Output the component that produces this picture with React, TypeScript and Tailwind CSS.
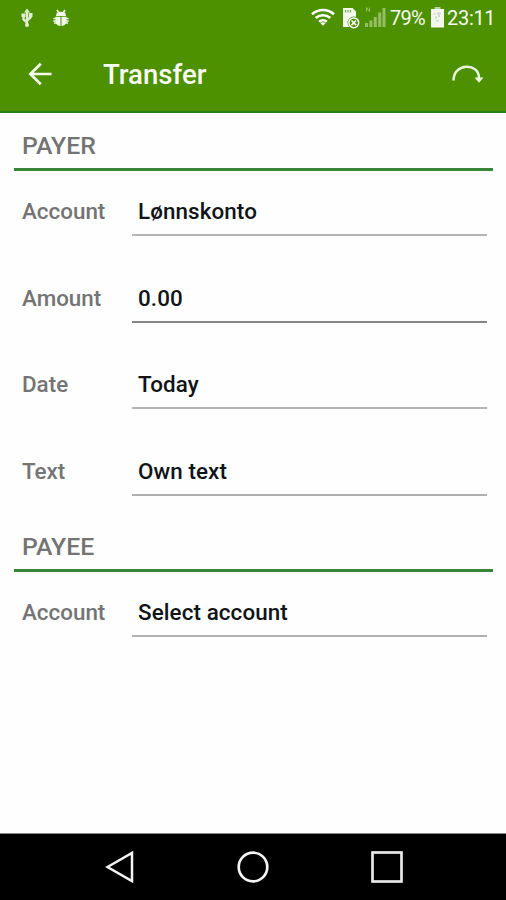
type Field = { label: string; value: string; line: string };

const payerFields: Field[] = [
  { label: 'Account', value: 'Lønnskonto', line: 'border-[#b4b4b4]' },
  { label: 'Amount', value: '0.00', line: 'border-[#858585]' },
  { label: 'Date', value: 'Today', line: 'border-[#b4b4b4]' },
  { label: 'Text', value: 'Own text', line: 'border-[#b0b0b0]' },
];

const payeeFields: Field[] = [
  { label: 'Account', value: 'Select account', line: 'border-[#b0b0b0]' },
];

function UsbIcon() {
  return (
    <svg width="14" height="20" viewBox="0 0 14 20" fill="none" stroke="#e0edd2" strokeWidth="2.4">
      <path d="M7 3v13M7 14.500 3.500 11.500V8M7 12.500l3.500-3V7" />
      <path d="M4 4.500 7 .5l3 4zM1.500 5.500h4V9h-4zM8.800 5h3.700v4H8.800z" fill="#e0edd2" stroke="none" />
      <circle cx="7" cy="17" r="2" fill="#e0edd2" stroke="none" />
    </svg>
  );
}

function BugIcon() {
  return (
    <svg width="16" height="18" viewBox="0 0 16 18" fill="#f0f7ea">
      <path d="M3 7C3 4 4.500 2.700 8 2.700S13 4 13 7z" />
      <path d="M2.500 7.800h5V17C4 16.800 2.500 14.500 2.500 12zM8.500 7.800h5V12c0 2.500-1.500 4.800-5 5z" />
      <path d="m4 1 1.500 2.500M12 1l-1.500 2.500M3 9.500H.5M3 12H.3M3.500 14H1M13 9.500h2.500M13 12h2.700M12.500 14H15" stroke="#f0f7ea" strokeWidth="1.700" />
    </svg>
  );
}

function WifiIcon() {
  return (
    <svg width="24" height="18" viewBox="0 0 24 18" fill="none" stroke="#fff" strokeWidth="2.700">
      <path d="M1 6.200c6.200-5.600 15.800-5.600 22 0M4.700 10c4.200-3.700 10.400-3.700 14.600 0M8.200 13.700c2.200-1.900 5.400-1.900 7.600 0" />
      <path d="m9.500 15.300 2.500 2.500 2.500-2.500c-1.400-1.300-3.600-1.300-5 0z" fill="#fff" stroke="none" />
    </svg>
  );
}

function SimIcon() {
  return (
    <svg width="18" height="22" viewBox="0 0 18 22">
      <path d="M1 1h9.500L14 4.500V20H1z" fill="#f4f9ef" />
      <path d="M3.500 3v2.500M6 3v2.500M8.500 3v2.500" stroke="#76a84a" strokeWidth="1.200" />
      <circle cx="11.800" cy="15.800" r="6.200" fill="#4d9000" />
      <circle cx="11.800" cy="15.800" r="4.900" fill="none" stroke="#fff" strokeWidth="1.500" />
      <path d="m9.500 13.500 4.600 4.600M14.100 13.500l-4.600 4.600" stroke="#fff" strokeWidth="1.600" />
    </svg>
  );
}

function SignalIcon() {
  return (
    <svg width="21" height="22" viewBox="0 0 21 22" fill="#94bf68">
      <path d="M0 17h3v4H0zM4.400 14.500h3V21h-3zM8.800 11h3v10h-3zM13.200 6.500h3V21h-3zM17.500 2h3v19h-3z" />
      <path d="M1.500 5.500v-4l3 4v-4" fill="none" stroke="#94bf68" />
    </svg>
  );
}

function BatteryIcon() {
  return (
    <svg width="13" height="21" viewBox="0 0 13 21">
      <path d="M3.500 0h6v2h-6z" fill="#b7d39a" />
      <path d="M0 2h13v18.500H0z" fill="#f4f7f0" />
      <path d="M3 6h1.500v2H3zM6 5.500h4v2H6zM7 8h2v2H7zM4 9.500h2v2H4zM5 13h3v1.500H5z" fill="#ced9c3" />
    </svg>
  );
}

function StatusBar() {
  return (
    <div className="flex h-9 items-center justify-between pl-5 pr-[10px] text-[20px] text-[#f6faf2]">
      <div className="flex items-center gap-[19px] pb-px">
        <UsbIcon />
        <BugIcon />
      </div>
      <div className="flex items-center">
        <div className="pb-[3px]"><WifiIcon /></div>
        <div className="ml-[7px]"><SimIcon /></div>
        <div className="ml-[5px] pb-[2px]"><SignalIcon /></div>
        <span className="ml-1 w-[41px] tracking-[-0.8px]">79%</span>
        <div className="pb-px"><BatteryIcon /></div>
        <span className="ml-[3px] w-[49px] tracking-[-0.3px]">23:11</span>
      </div>
    </div>
  );
}

function FieldRow({ label, value, line }: Field) {
  return (
    <div className="flex h-[65px] items-end pl-2 pr-[6px] text-[22.4px] leading-[26px] font-medium">
      <div className="w-[110px] pb-[12px] text-[#747474]">{label}</div>
      <div className={`flex-1 border-b-2 pb-[10px] pl-[6px] tracking-[0.1px] text-[#101417] ${line}`}>{value}</div>
    </div>
  );
}

function Section({ title, fields }: { title: string; fields: Field[] }) {
  return (
    <section>
      <h2 className="h-[58px] border-b-3 border-[#378637] pl-2 pt-[18px] text-[24.8px] leading-[30px] font-medium text-[#747474]">
        {title}
      </h2>
      <div className="flex flex-col gap-[21.7px]">
        {fields.map((field) => (
          <FieldRow key={field.label} {...field} />
        ))}
      </div>
    </section>
  );
}

export default function App() {
  return (
    <div className="flex h-[900px] w-[506px] flex-col overflow-hidden bg-[#fefefe] font-['Roboto',sans-serif]">
      <header className="h-[113px] shrink-0 border-b-2 border-[#268019] bg-[#4d9000]">
        <StatusBar />
        <div className="flex h-[75px] items-center pl-7 pr-[22px]">
          <svg width="24" height="24" viewBox="0 0 24 24" fill="none" stroke="#f5faef" strokeWidth="2.700">
            <path d="M23.500 12H2.500M12.800 1.800 2.400 12l10.400 10.200" />
          </svg>
          <h1 className="ml-[51px] flex-1 pt-[2px] text-[27.6px] font-medium text-[#f8fbf4]">Transfer</h1>
          <svg width="32" height="20" viewBox="0 0 32 20" fill="none">
            <path d="M1.500 16.500C1.500 -1.500 27 -1.500 27 14" stroke="#e9f5dc" strokeWidth="2.500" />
            <path d="M22.500 13.500h9L27 18.800z" fill="#e9f5dc" />
          </svg>
        </div>
      </header>

      <main className="flex-1 pl-[14px] pr-[13px]">
        <Section title="PAYER" fields={payerFields} />
        <div className="mt-[18px]">
          <Section title="PAYEE" fields={payeeFields} />
        </div>
      </main>

      <nav className="flex h-[67px] shrink-0 items-center justify-center gap-[102px] border-t border-[#888] bg-black pl-[2px]">
        <svg width="30" height="32" viewBox="0 0 30 32" fill="none" stroke="#f4f4f4" strokeWidth="2.500">
          <path d="M2.500 16 27 1.900v28.200z" />
        </svg>
        <svg width="32" height="32" viewBox="0 0 32 32" fill="none" stroke="#f4f4f4" strokeWidth="2.700">
          <circle cx="16" cy="16" r="14.300" />
        </svg>
        <svg width="32" height="32" viewBox="0 0 32 32" fill="none" stroke="#e8e8e8" strokeWidth="2.700">
          <rect x="1.500" y="1.500" width="29" height="29" />
        </svg>
      </nav>
    </div>
  );
}
